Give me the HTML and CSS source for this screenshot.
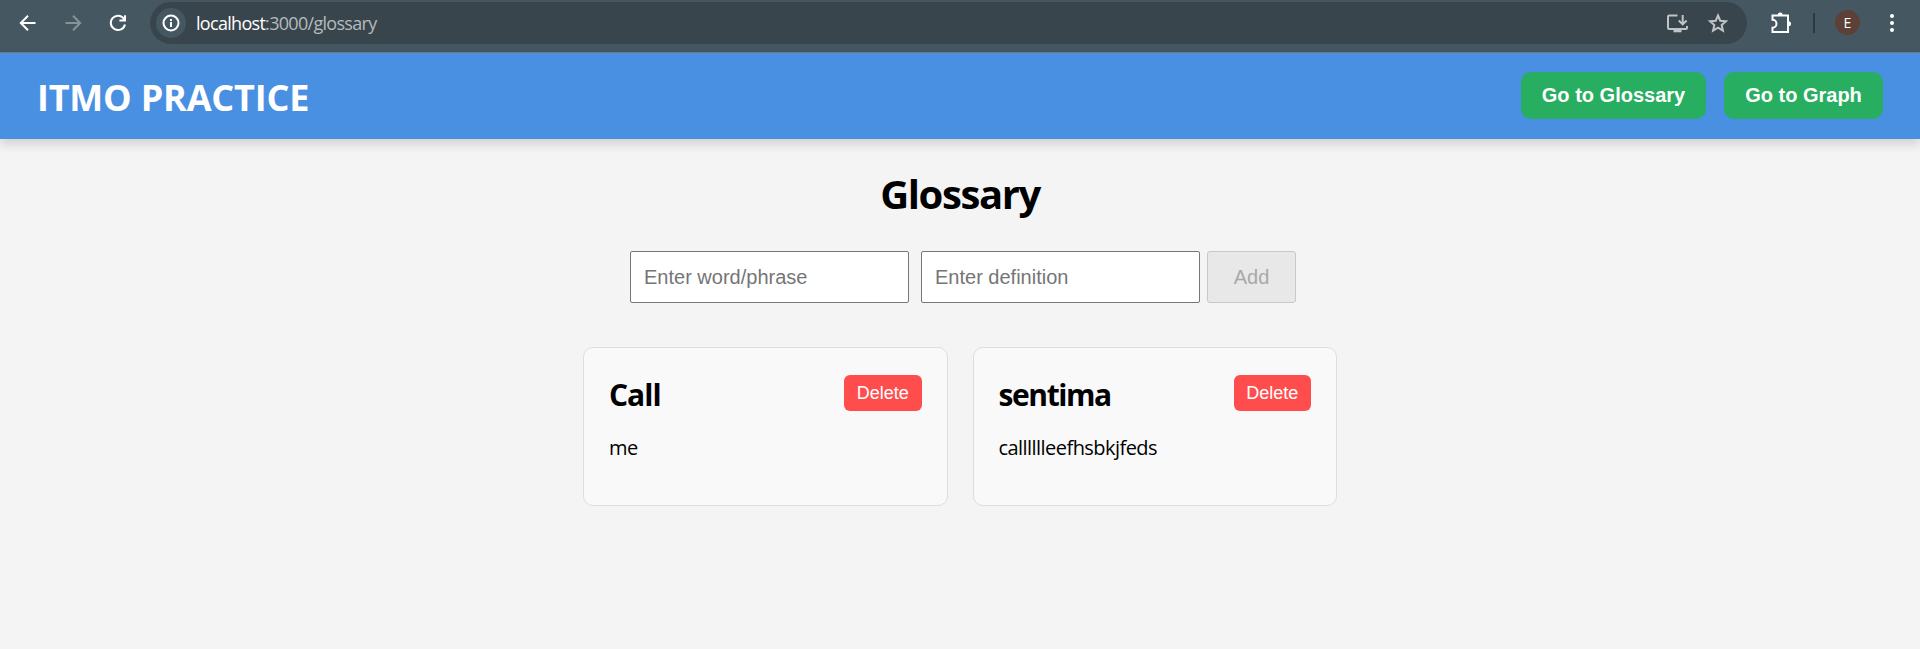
FILE: index.html
```html
<!DOCTYPE html>
<html lang="en">
<head>
<meta charset="utf-8">
<title>Glossary</title>
<link rel="stylesheet" href="styles.css">
</head>
<body>
<div class="toolbar">
  <div class="nav-icons">
    <svg class="icon" viewBox="0 0 24 24"><path d="M19.500 12H5M12 4.800L4.800 12l7.200 7.200"/></svg>
    <svg class="icon icon-off" viewBox="0 0 24 24"><path d="M4.500 12H19M12 4.800l7.200 7.200-7.200 7.200"/></svg>
    <svg class="icon" viewBox="0 0 24 24"><path d="M18.200 8.200A7.200 7.200 0 1 0 19 13.500M19 4.300V9.600h-5.600"/></svg>
  </div>
  <div class="omnibox">
    <span class="site-info"><svg class="info" viewBox="0 0 18 18"><circle cx="9" cy="9" r="7.500"/><path d="M9 8v5M9 5v2"/></svg></span>
    <span class="url"><span class="host">localhost</span>:3000/glossary</span>
    <svg class="box-icon" viewBox="0 0 24 24"><path d="M12.500 4.500H4.200Q3 4.500 3 5.700V16.800Q3 18 4.200 18H20.800Q22 18 22 16.800V15M17.700 4v9M13.800 9.500l3.900 3.900 3.900-3.900"/><path class="solid" d="M8.500 18h8v3.300h-8z"/></svg>
    <svg class="box-icon star" viewBox="0 0 24 24"><path d="M12 4.500l2.250 5.250 5.700.5-4.300 3.750 1.300 5.600L12 16.600 7.050 19.600l1.300-5.600-4.300-3.750 5.700-.5z"/></svg>
  </div>
  <svg class="icon puzzle" viewBox="0 0 24 24"><path d="M3.500 4.500H19V21H3.500V16.800a4 4 0 0 0 0-8z"/><path class="solid" d="M8.700 4a2.500 2.500 0 0 1 5 0zM19.500 10.300a2.500 2.500 0 0 1 0 5z"/></svg>
  <span class="divider"></span>
  <span class="avatar">E</span>
  <span class="menu"><i></i><i></i><i></i></span>
</div>
<header class="header">
  <div class="brand">ITMO PRACTICE</div>
  <nav class="links"><button class="link link-glossary">Go to Glossary</button><button class="link link-graph">Go to Graph</button></nav>
</header>
<main class="main">
  <h1 class="title">Glossary</h1>
  <form class="form">
    <input class="field" placeholder="Enter word/phrase">
    <input class="field" placeholder="Enter definition">
    <button class="add" disabled>Add</button>
  </form>
  <div class="cards">
    <section class="card">
      <div class="card-head"><h2 class="term term-short">Call</h2><button class="delete">Delete</button></div>
      <p class="definition">me</p>
    </section>
    <section class="card">
      <div class="card-head"><h2 class="term">sentima</h2><button class="delete">Delete</button></div>
      <p class="definition">calllllleefhsbkjfeds</p>
    </section>
  </div>
</main>
</body>
</html>
```
FILE: styles.css
```css
* { box-sizing: border-box; }
body { margin: 0; height: 649px; overflow: hidden; background: #f4f4f4; color: #000; font-family: "Open Sans", "Noto Sans", sans-serif; }
button, input { font-family: "Liberation Sans", Arial, sans-serif; margin: 0; }
svg { display: block; flex: none; fill: none; stroke: #fff; stroke-width: 2; }
.solid { fill: currentColor; stroke: none; }

.toolbar { display: flex; align-items: center; height: 53px; padding: 0 0 7px 16px; background: #455761; border-bottom: 1px solid #757a7d; color: #fff; }
.nav-icons { display: flex; gap: 21px; width: 134px; }
.icon { width: 24px; height: 24px; }
.icon-off { stroke: #87939a; }
.omnibox { display: flex; align-items: center; width: 1597px; height: 42px; margin-top: 1px; padding: 0 17px 0 6px; border-radius: 21px; background: #39454c; color: #c0c4c7; }
.site-info { display: grid; place-items: center; width: 30px; height: 30px; border-radius: 50%; background: #455761; }
.info { width: 18px; height: 18px; }
.url { flex: 1; margin-left: 10px; color: #b4babd; font-size: 18px; letter-spacing: -0.7px; line-height: 24px; }
.host { color: #fff; }
.box-icon { width: 24px; height: 24px; stroke: #c0c4c7; }
.star { margin-left: 17px; }
.puzzle { margin-left: 22px; }
.divider { width: 2px; height: 20px; margin-left: 20px; background: #2e3a41; }
.avatar { display: grid; place-items: center; width: 25px; height: 25px; margin-left: 20px; border-radius: 50%; background: #5d4037; font-size: 14px; line-height: 1; }
.menu { display: grid; gap: 3px; margin-left: 30px; }
.menu i { width: 4px; height: 4px; border-radius: 50%; background: #fff; }

.header { position: relative; display: flex; justify-content: space-between; align-items: flex-start; height: 86px; padding: 19px 37px 0; background: #4a90e2; box-shadow: 0 5px 10px rgba(0, 0, 0, .15); }
.brand { margin-top: 1px; color: #fff; font-size: 36px; font-weight: 700; letter-spacing: -0.2px; line-height: 50px; }
.links { display: flex; gap: 18px; }
.link { height: 47px; padding: 0; border: 0; border-radius: 10px; background: #27ae60; color: #fff; font-size: 20px; font-weight: 700; }
.link-glossary { width: 185px; }
.link-graph { width: 159px; }

.main { display: flex; flex-direction: column; align-items: center; padding-top: 27px; }
.title { margin: 0; font-size: 40px; font-weight: 700; letter-spacing: -1.4px; line-height: 56px; }
.form { display: flex; margin: 29px 0 0 6px; }
.field { width: 279px; height: 52px; margin-right: 12px; padding: 0 13px; border: 1px solid #767676; border-radius: 2px; background: #fff; font-size: 20px; }
.field + .field { margin-right: 7px; }
.field::placeholder { color: #757575; }
.add { width: 89px; height: 52px; padding: 0; border: 1px solid #c8c8c8; border-radius: 3px; background: #e8e8e8; color: #a8a8a8; font-size: 20px; }
.cards { display: flex; gap: 25px; margin-top: 44px; }
.card { width: 364.500px; height: 159px; padding: 24px 25px; border: 1px solid #ddd; border-radius: 10px; background: #f9f9f9; }
.card-head { display: flex; justify-content: space-between; align-items: flex-start; height: 44px; padding-top: 3px; }
.term { margin: 0; font-size: 30px; font-weight: 700; letter-spacing: -1.4px; line-height: 40px; }
.term-short { letter-spacing: -1px; }
.delete { width: 77.500px; height: 36px; padding: 0; border: 0; border-radius: 6px; background: #ff4d4d; color: #fff; font-size: 18px; }
.definition { margin: 18px 0 0; font-size: 20px; letter-spacing: -0.55px; line-height: 28px; }
```
